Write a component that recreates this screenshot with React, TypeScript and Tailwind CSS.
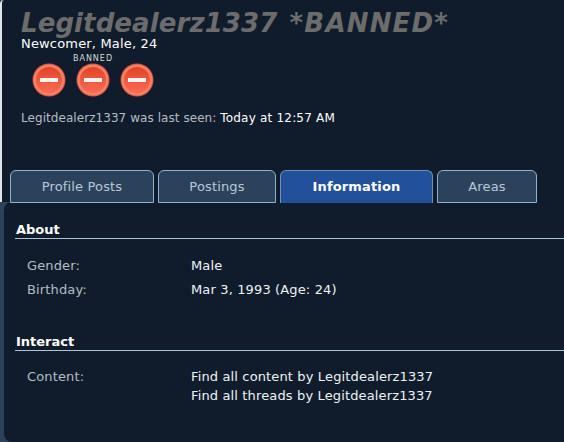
const font = { fontFamily: '"DejaVu Sans", Verdana, sans-serif' }

const tabs = [
  { label: 'Profile Posts', width: 'w-[144px]', active: false },
  { label: 'Postings', width: 'w-[118px]', active: false },
  { label: 'Information', width: 'w-[153px]', active: true },
  { label: 'Areas', width: 'w-[100px]', active: false },
]

function BanBadge() {
  return (
    <svg width="34" height="34" viewBox="0 0 34 34" className="block">
      <defs>
        <linearGradient id="ban" x1="0" y1="0" x2="0" y2="1">
          <stop offset="0" stopColor="#df4626" />
          <stop offset="1" stopColor="#fb6a55" />
        </linearGradient>
      </defs>
      <circle cx="17" cy="17" r="16.5" fill="#d4573c" />
      <circle cx="17" cy="17" r="15.5" fill="#f77f68" />
      <circle cx="17" cy="17" r="13" fill="url(#ban)" />
      <rect x="8" y="15" width="18" height="4" fill="#fdf3ef" />
    </svg>
  )
}

function Section({ title, children }: { title: string; children: React.ReactNode }) {
  return (
    <section>
      <h3 className="ml-[11px] h-[18px] border-b border-[#a9c5d8] pt-[1px] pl-[1px] text-[13px] leading-[16px] font-bold text-white">
        {title}
      </h3>
      {children}
    </section>
  )
}

function Row({ label, children }: { label: string; children: React.ReactNode }) {
  return (
    <div className="flex pl-[23px] text-[13px] leading-[19px] tracking-[0.14px]">
      <div className="w-[164px] text-[#b5bdc4]">{label}</div>
      <div className="text-[#eef2f6]">{children}</div>
    </div>
  )
}

export default function App() {
  return (
    <div className="h-[442px] w-[564px] overflow-hidden bg-[#2c415c]" style={font}>
      {/* header */}
      <div className="h-[202px] rounded-tl-[4px] border-l-2 border-[#dfe5ea] bg-[#101c2b] pl-[19px]">
        <h1 className="pt-[10px] text-[26px] leading-[27px] font-bold tracking-[0.1px] text-[#6c6c6c] italic">
          Legitdealerz1337 <span className="ml-[3px] tracking-[1.2px]">*BANNED*</span>
        </h1>
        <div className="mt-[1px] text-[13px] leading-[12px] tracking-[0.17px] text-white">Newcomer, Male, 24</div>
        <div className="mt-[13px] flex gap-[10px] pl-[11px]">
          <BanBadge />
          <div className="relative">
            <span className="absolute -top-[9px] -left-[7px] w-[48px] text-center text-[8px] leading-[9px] tracking-[1px] text-[#d5d9dd]">BANNED</span>
            <BanBadge />
          </div>
          <BanBadge />
        </div>
        <p className="mt-[13px] text-[12px] leading-[16px] tracking-[0.06px] text-[#b5bdc4]">
          Legitdealerz1337 was last seen: <span className="tracking-[0.2px] text-white">Today at 12:57 AM</span>
        </p>
        {/* tabs */}
        <div className="mt-[44px] -ml-[11px] flex gap-[4px]">
          {tabs.map((tab) => (
            <div
              key={tab.label}
              className={`${tab.width} flex h-[33px] items-center justify-center rounded-t-[6px] border text-[13px] tracking-[0.15px] ${
                tab.active
                  ? 'border-[#6f93b8] border-b-0 bg-[#22509a] font-bold text-white'
                  : 'border-[#8fb4d0] bg-[#2c425c] text-[#b9c8d8]'
              }`}
            >
              {tab.label}
            </div>
          ))}
        </div>
      </div>

      {/* panel */}
      <div className="ml-[4px] h-[240px] rounded-tl-[8px] rounded-bl-[8px] bg-[#101c2b] pt-[19px]">
        <Section title="About">
          <div className="flex flex-col gap-[5px] pt-[17px]">
            <Row label="Gender:">Male</Row>
            <Row label="Birthday:">Mar 3, 1993 (Age: 24)</Row>
          </div>
        </Section>
        <div className="mt-[34px]">
          <Section title="Interact">
            <div className="pt-[16px]">
              <Row label="Content:">
                Find all content by Legitdealerz1337
                <br />
                Find all threads by Legitdealerz1337
              </Row>
            </div>
          </Section>
        </div>
      </div>
    </div>
  )
}
